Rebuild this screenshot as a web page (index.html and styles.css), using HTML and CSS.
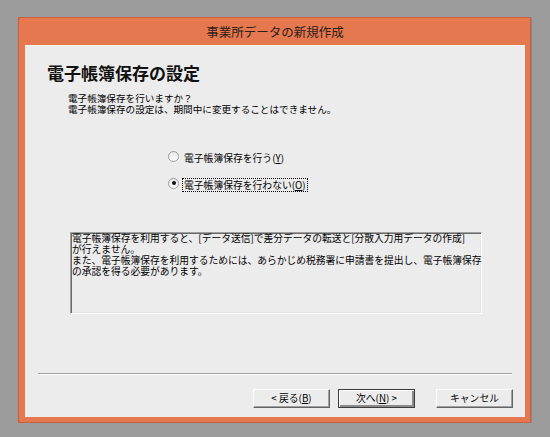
FILE: index.html
```html
<!DOCTYPE html>
<html lang="ja">
<head>
    <meta charset="UTF-8">
    <meta name="viewport" content="width=device-width, initial-scale=1.0">
    <title>事業所データの新規作成</title>
    <link rel="stylesheet" href="styles.css">
</head>
<body>

    <div class="window">
        <div class="titlebar">事業所データの新規作成</div>

        <div class="client">
            <h1>電子帳簿保存の設定</h1>

            <p class="lead">電子帳簿保存を行いますか？<br>電子帳簿保存の設定は、期間中に変更することはできません。</p>

            <div class="options">
                <label class="option">
                    <span class="radio"></span>
                    <span class="text">電子帳簿保存を行う(<u>Y</u>)</span>
                </label>
                <label class="option">
                    <span class="radio checked"></span>
                    <span class="text focus">電子帳簿保存を行わない(<u>O</u>)</span>
                </label>
            </div>

            <div class="note">電子帳簿保存を利用すると、[データ送信]で差分データの転送と[分散入力用データの作成]<br>が行えません。<br>また、電子帳簿保存を利用するためには、あらかじめ税務署に申請書を提出し、電子帳簿保存<br>の承認を得る必要があります。</div>

            <div class="separator"></div>

            <div class="buttons">
                <button class="btn">&lt; 戻る(<u>B</u>)</button>
                <button class="btn default">次へ(<u>N</u>) &gt;</button>
                <button class="btn cancel">キャンセル</button>
            </div>
        </div>
    </div>

</body>
</html>
```

FILE: styles.css
```css
body {
    margin: 0;
    background-color: #9b9b9b;
    font-family: "Noto Sans CJK JP", "Noto Sans", sans-serif;
    color: #000;
}

.window {
    box-sizing: border-box;
    width: 513px;
    height: 406px;
    margin: 17px 0 0 18px;
    padding: 0 5px 5px 6px;
    background-color: #e5784e;
    border: 1px solid #c4633f;
    box-shadow: 1px 1px 0 rgba(0, 0, 0, 0.12);
}

.titlebar {
    height: 27px;
    line-height: 28px;
    text-align: center;
    font-size: 12.5px;
    color: #2e2019;
}

.client {
    box-sizing: border-box;
    height: 372px;
    display: flex;
    flex-direction: column;
    padding: 18px 12px 9px 0;
    background-color: #ececec;
    border-top: 1px solid #f3f3f3;
}

h1 {
    margin: -1px 0 0 22px;
    font-size: 17px;
    line-height: 20px;
    font-weight: bold;
    color: #111;
}

.lead {
    margin: 10px 0 0 43px;
    font-size: 9.6px;
    line-height: 11px;
    white-space: nowrap;
}

.options {
    display: flex;
    flex-direction: column;
    gap: 13px;
    margin: 34px 0 0 143px;
}

.option {
    display: flex;
    align-items: center;
    height: 14px;
    font-size: 9.8px;
}

.radio {
    box-sizing: border-box;
    width: 11px;
    height: 11px;
    margin-right: 3px;
    border: 1px solid #9c9c9c;
    border-radius: 50%;
    background: linear-gradient(#e6e6e6, #ffffff);
    display: flex;
    align-items: center;
    justify-content: center;
}

.radio.checked::after {
    content: "";
    width: 4px;
    height: 4px;
    border-radius: 50%;
    background-color: #111;
}

.text {
    padding: 0 1px;
    line-height: 12px;
    border: 1px solid transparent;
    margin-top: 3px;
}

.text.focus {
    border: 1px dotted #000;
}

.note {
    box-sizing: border-box;
    width: 412px;
    height: 82px;
    margin: 42px 0 0 45px;
    padding: 0 0 0 1px;
    font-size: 9.75px;
    line-height: 11px;
    white-space: nowrap;
    border-style: solid;
    border-width: 1px;
    border-color: #a0a0a0 #ffffff #ffffff #a0a0a0;
    box-shadow: inset 1px 1px 0 #696969, inset -1px -1px 0 #e3e3e3;
}

.separator {
    width: 474px;
    height: 1px;
    margin: 59px 0 0 13px;
    background-color: #a0a0a0;
    border-bottom: 1px solid #ffffff;
}

.buttons {
    display: flex;
    justify-content: flex-end;
    gap: 8px;
    margin-top: 14px;
}

.btn {
    box-sizing: border-box;
    width: 77px;
    height: 19px;
    padding: 0;
    font-family: "Noto Sans CJK JP", "Noto Sans", sans-serif;
    font-size: 9.8px;
    line-height: 15px;
    color: #000;
    background-color: #ececec;
    border-style: solid;
    border-width: 1px;
    border-color: #ffffff #646464 #646464 #ffffff;
    box-shadow: inset -1px -1px 0 #a0a0a0;
}

.btn.default {
    border: 1px solid #3c3c3c;
    box-shadow: inset 1px 1px 0 #ffffff, inset -2px -2px 0 #8a8a8a;
}

.btn.cancel {
    margin-left: 13px;
}
```
